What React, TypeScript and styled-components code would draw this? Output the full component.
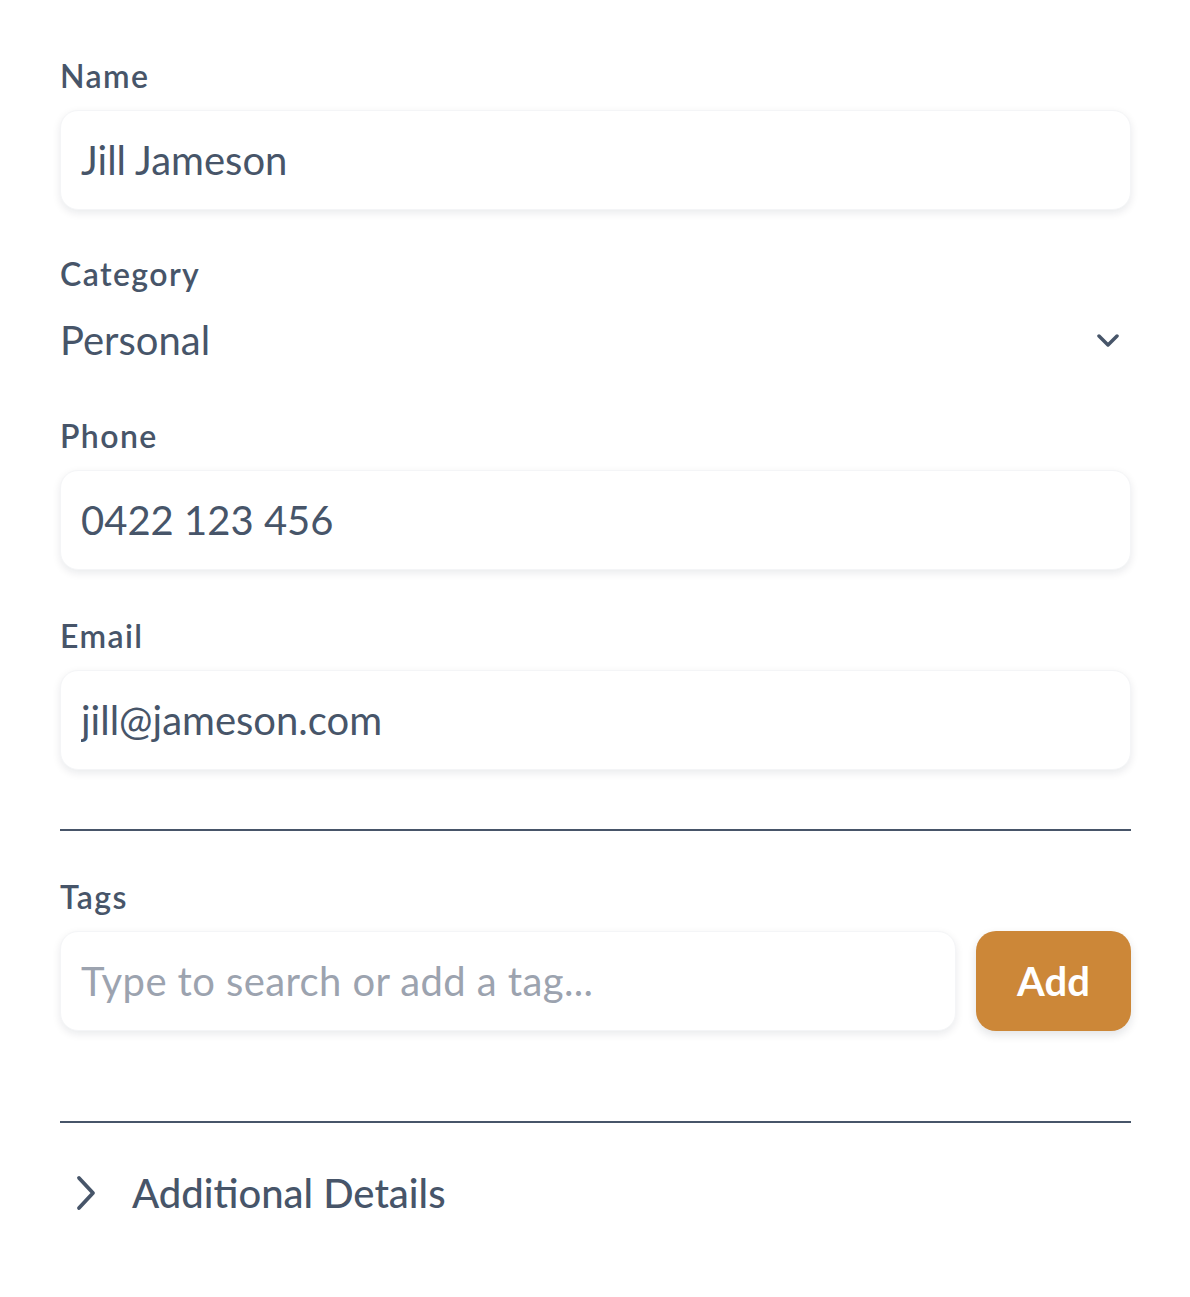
import React from "react";
import styled, { createGlobalStyle } from "styled-components";

const GlobalStyle = createGlobalStyle`
  html, body { margin: 0; padding: 0; background: #ffffff; }
  body { font-family: "Lato", "Noto Sans", sans-serif; color: #475569; }
  * { box-sizing: border-box; }
`;

const Form = styled.form`
  display: flex;
  flex-direction: column;
  padding: 56px 59px 80px 60px;
`;

const Field = styled.div<{ $mt?: number }>`
  display: flex;
  flex-direction: column;
  gap: 14px;
  margin-top: ${(p) => p.$mt ?? 0}px;
`;

const Label = styled.label`
  font-size: 32px;
  line-height: 40px;
  font-weight: 600;
  letter-spacing: 1.4px;
  color: #475569;
`;

const TextInput = styled.input`
  width: 100%;
  height: 100px;
  padding: 0 20px;
  border: 1px solid #f4f5f7;
  border-radius: 18px;
  background: #ffffff;
  box-shadow: 0 3px 8px rgba(15, 23, 42, 0.09);
  font-family: inherit;
  font-size: 40px;
  color: #475569;
  outline: none;
  &::placeholder { color: #9ca3af; letter-spacing: 0.4px; }
`;

const SelectWrap = styled.div`
  position: relative;
  height: 64px;
  display: flex;
  align-items: center;
`;

const Select = styled.select`
  appearance: none;
  width: 100%;
  height: 100%;
  border: none;
  background: transparent;
  padding: 0;
  font-family: inherit;
  font-size: 40px;
  color: #475569;
  outline: none;
`;

const SelectIcon = styled.svg`
  position: absolute;
  right: 12px;
  top: 26px;
  pointer-events: none;
`;

const Divider = styled.hr<{ $mt: number }>`
  margin: ${(p) => p.$mt}px 0 0;
  border: none;
  height: 2px;
  background: #475569;
`;

const TagRow = styled.div`
  display: flex;
  gap: 20px;
`;

const AddButton = styled.button`
  flex: 0 0 155px;
  height: 100px;
  border: none;
  border-radius: 20px;
  background: #cc8738;
  color: #ffffff;
  font-family: inherit;
  font-size: 40px;
  font-weight: 700;
  box-shadow: 0 4px 10px rgba(15, 23, 42, 0.12);
  cursor: pointer;
`;

const Disclosure = styled.button`
  display: flex;
  align-items: center;
  gap: 36px;
  margin-top: 46px;
  padding: 0 0 0 16px;
  border: none;
  background: transparent;
  font-family: inherit;
  font-size: 40px;
  line-height: 48px;
  font-weight: 500;
  color: #475569;
  text-align: left;
  cursor: pointer;
`;

export default function App() {
  return (
    <>
      <GlobalStyle />
      <Form onSubmit={(e) => e.preventDefault()}>
        <Field>
          <Label>Name</Label>
          <TextInput defaultValue="Jill Jameson" />
        </Field>
        <Field $mt={44}>
          <Label>Category</Label>
          <SelectWrap>
            <Select defaultValue="Personal">
              <option>Personal</option>
              <option>Work</option>
            </Select>
            <SelectIcon width="22" height="14" viewBox="0 0 22 14" fill="none">
              <path d="M2 2 L11 11 L20 2" stroke="#475569" strokeWidth="3.5" strokeLinecap="round" strokeLinejoin="round" />
            </SelectIcon>
          </SelectWrap>
        </Field>
        <Field $mt={44}>
          <Label>Phone</Label>
          <TextInput defaultValue="0422 123 456" />
        </Field>
        <Field $mt={46}>
          <Label>Email</Label>
          <TextInput defaultValue="jill@jameson.com" />
        </Field>
        <Divider $mt={59} />
        <Field $mt={46}>
          <Label>Tags</Label>
          <TagRow>
            <TextInput placeholder="Type to search or add a tag..." />
            <AddButton type="button">Add</AddButton>
          </TagRow>
        </Field>
        <Divider $mt={90} />
        <Disclosure type="button">
          <svg width="20" height="36" viewBox="0 0 20 36" fill="none">
            <path d="M3 3 L17 18 L3 33" stroke="#475569" strokeWidth="3.8" strokeLinecap="round" strokeLinejoin="round" />
          </svg>
          Additional Details
        </Disclosure>
      </Form>
    </>
  );
}
